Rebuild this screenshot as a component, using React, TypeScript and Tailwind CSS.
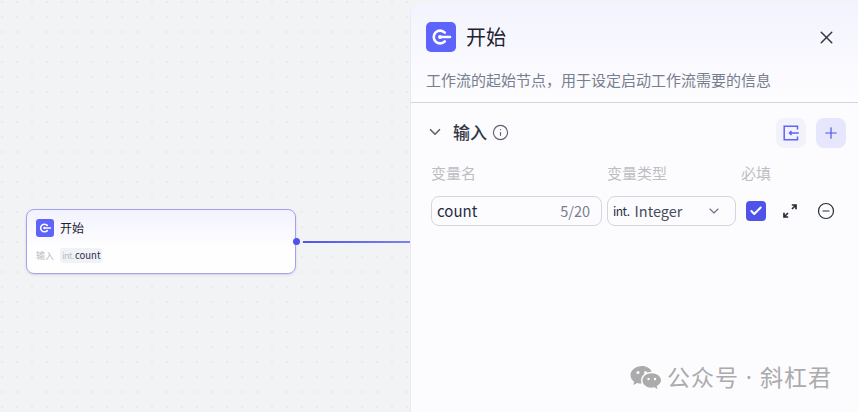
import { X, ChevronDown, Info, Plus, Check, CircleMinus } from 'lucide-react';

// 开始节点的图标
function StartIcon({ size }: { size: number }) {
  return (
    <svg width={size} height={size} viewBox="0 0 30 30" fill="none">
      <rect width="30" height="30" rx="5" fill="#5E63FB" />
      <path d="M18.8 10.6 A6.4 6.4 0 1 0 18.8 19.400" stroke="white" strokeWidth="2.6" strokeLinecap="round" />
      <circle cx="14" cy="15" r="1.900" fill="white" />
      <path d="M14 15 H24" stroke="white" strokeWidth="2.600" strokeLinecap="round" />
    </svg>
  );
}

function ImportIcon() {
  return (
    <svg width="18" height="18" viewBox="0 0 18 18" fill="none" stroke="#5E63FB" strokeWidth="1.5">
      <path d="M15.500 5.500 V2.200 H2.200 V15.800 H15.500 V12.500" />
      <path d="M16.800 9 H7.500 M9.500 7 L7.500 9 L9.500 11" />
    </svg>
  );
}

// 展开图标，两段箭头中间断开
function ExpandIcon() {
  return (
    <svg width="16" height="16" viewBox="0 0 16 16" fill="none" stroke="#262d38" strokeWidth="1.700">
      <path d="M9.800 2 H14 V6.200 M14 2 L10 6" />
      <path d="M6.200 14 H2 V9.800 M2 14 L6 10" />
    </svg>
  );
}

function WeChatIcon() {
  return (
    <svg width="32" height="26" viewBox="0 0 32 26" fill="#ABABAB">
      <path d="M12 2C6 2 0.5 6 0.5 11c0 3 1.6 5.2 3.7 6.8L3.2 21l4-2c1.500.4 3 .7 4.500.6-.5-1-.7-2.100-.7-3.100 0-5 4.700-8.700 10-8.700h.8C20.600 4.600 16.600 2 12 2z" />
      <path d="M21.500 9.300c-5 0-9 3.200-9 7.200s4 7.200 9 7.200c1 0 2-.2 3-.5l3 2-.7-3.300c2.500-1.300 4.200-3.300 4.200-5.400 0-4-4-7.200-9.500-7.200z" />
      <circle cx="8" cy="8.500" r="1.500" fill="white" />
      <circle cx="15.500" cy="8.500" r="1.500" fill="white" />
      <circle cx="18.500" cy="15" r="1.200" fill="white" />
      <circle cx="25" cy="15" r="1.200" fill="white" />
    </svg>
  );
}

function StartNode() {
  return (
    <div className="absolute left-[26px] top-[209px] h-[65px] w-[270px] rounded-lg border border-[#a5a0f5] bg-gradient-to-b from-[#f2f2fe] to-[#fefeff] to-60% px-[9px] pt-[9px] shadow-sm">
      <div className="flex items-center gap-[6px]">
        <StartIcon size={18} />
        <span className="text-xs leading-[18px] text-[#1c2230]">开始</span>
      </div>
      <div className="mt-[11px] flex items-center gap-[6px] text-[9px]">
        <span className="text-[#b9bcc4]">输入</span>
        <span className="flex h-[15px] items-center gap-[1px] rounded-[3px] bg-[#f1f2f7] px-[2px]">
          <span className="tracking-[-0.5px] text-[#b9bcc4]">int.</span>
          <span className="text-[9.5px] text-[#262d45]">count</span>
        </span>
      </div>
      <div className="absolute left-[265.500px] top-[28px] h-[7px] w-[7px] rounded-full bg-[#4f53ea]" />
    </div>
  );
}

export default function App() {
  return (
    <div className="flex h-[412px] w-[858px] overflow-hidden bg-[#f2f3f5] font-['Noto_Sans_CJK_SC','Noto_Sans',sans-serif]">
      <div className="relative h-full w-[410px] bg-[radial-gradient(circle_at_2px_2px,#e9eaed_1px,transparent_1.5px)] bg-[size:15px_15px]">
        <div className="absolute left-[303px] top-[241px] h-[2px] w-[107px] bg-gradient-to-r from-[#4f53ea] to-[#7d80f0]" />
        <StartNode />
      </div>

      {/* 右侧配置面板 */}
      <div className="relative mt-[2px] flex h-[410px] w-[448px] flex-col rounded-tl-xl border-l border-[#e8e9f3] bg-[#fcfcff]">
        <div className="rounded-tl-xl bg-gradient-to-b from-[#f3f3fe] to-[#fdfdff] px-[15px] pt-[20px]">
          <div className="flex h-[30px] items-center">
            <StartIcon size={30} />
            <span className="ml-[10px] text-xl font-normal text-[#1f2330]">开始</span>
            <X className="ml-auto mr-[6px] text-[#333844]" size={21} strokeWidth={1.7} />
          </div>
          <p className="mt-[17px] pb-[11px] text-[15px] leading-[22px] text-[#787e8e]">工作流的起始节点，用于设定启动工作流需要的信息</p>
        </div>
        <div className="h-px bg-[#d2d5e0]" />

        <div className="flex items-center px-[15px] pt-[15px]">
          <ChevronDown className="mb-[2px] text-[#5c6270]" size={18} strokeWidth={2.2} />
          <span className="mb-[2px] ml-[9px] text-[17px] font-medium text-[#333844]">输入</span>
          <Info className="mb-[2px] ml-[5px] text-[#5c6270]" size={17} strokeWidth={1.6} />
          <button className="ml-auto flex h-[30px] w-[30px] items-center justify-center rounded-lg bg-[#f2f2fb]">
            <ImportIcon />
          </button>
          <button className="ml-[10px] mr-[-3px] flex h-[30px] w-[30px] items-center justify-center rounded-lg bg-[#e6e7fc]">
            <Plus className="text-[#4f53ea]" size={18} strokeWidth={1.6} />
          </button>
        </div>

        <div className="mt-[14px] flex pl-[20px] text-[15px] leading-[22px] text-[#bcbec4]">
          <span className="w-[176px]">变量名</span>
          <span className="w-[134px]">变量类型</span>
          <span>必填</span>
        </div>

        <div className="mt-[12px] flex items-center pl-[20px]">
          <div className="flex h-[30px] w-[171px] items-center justify-between rounded-lg border border-[#d3d5e0] pl-[5px] pr-[11px] text-[15px] text-[#262d45]">
            <span>count</span>
            <span className="text-[14.5px] text-[#787e8e]">5/20</span>
          </div>
          <div className="ml-[5px] flex h-[30px] w-[129px] items-center rounded-lg border border-[#d3d5e0] pl-[5px] text-[14.5px] text-[#454b5c]">
            <span className="text-xs tracking-[-0.5px] text-[#262d45]">int.</span>
            <span className="ml-[5px]">Integer</span>
            <ChevronDown className="ml-auto mr-[13px] text-[#676f83]" size={16} strokeWidth={1.6} />
          </div>
          <div className="ml-[10px] flex h-[20px] w-[20px] items-center justify-center rounded-[4px] bg-[#4f53ea]">
            <Check className="text-white" size={14} strokeWidth={3.5} />
          </div>
          <span className="ml-[16px]"><ExpandIcon /></span>
          <CircleMinus className="ml-[19px] text-[#262d38]" size={18} strokeWidth={1.6} />
        </div>

        {/* 水印 */}
        <div className="mt-auto mb-[20px] mr-[26px] flex items-center justify-end gap-[5px] font-['Noto_Sans','Noto_Sans_CJK_SC',sans-serif] text-[23px] leading-[30px] tracking-[1px] text-[#ababab]">
          <WeChatIcon />
          <span>公众号 · 斜杠君</span>
        </div>
      </div>
    </div>
  );
}
